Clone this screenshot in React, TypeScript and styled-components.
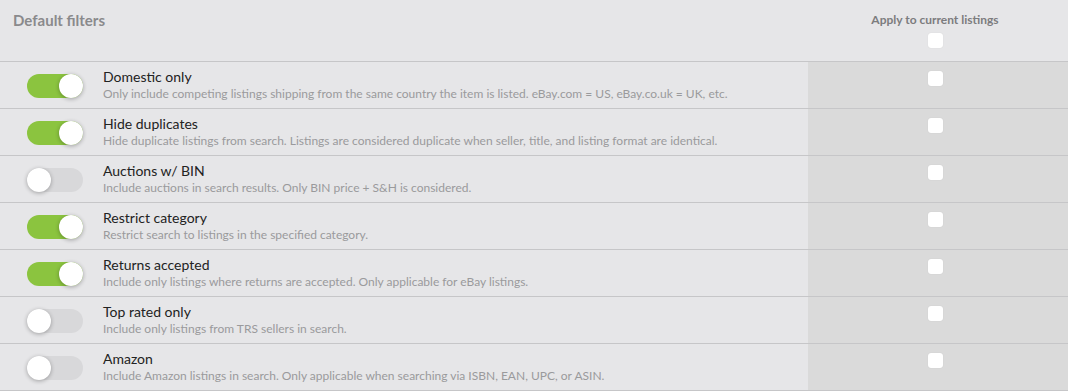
import styled, { createGlobalStyle } from "styled-components";

const GlobalStyle = createGlobalStyle`
    html, body {
        margin: 0;
        padding: 0;
        background: #e6e6e8;
        font-family: Lato, "Open Sans", sans-serif;
    }
`;

const Table = styled.div`
    width: 1068px;
    background: #e6e6e8;
`;

const HeaderRow = styled.div`
    display: grid;
    grid-template-columns: 808px 1fr;
    height: 62px;
    border-bottom: 1px solid #c6c6c8;
    box-sizing: border-box;
`;

const Title = styled.h2`
    margin: 0;
    padding: 11px 0 0 13px;
    font-size: 15px;
    font-weight: 700;
    color: #8a8a8c;
`;

const ApplyHead = styled.div`
    display: flex;
    flex-direction: column;
    align-items: center;
    padding: 12px 6px 0 0;
    gap: 6px;
    font-size: 12px;
    line-height: 15px;
    font-weight: 700;
    color: #7c7c7e;
`;

const Row = styled.div`
    display: grid;
    grid-template-columns: 808px 1fr;
    height: 47px;
    border-bottom: 1px solid #c6c6c8;
    box-sizing: border-box;
`;

const Main = styled.div`
    display: flex;
    align-items: flex-start;
    padding-top: 6px;
`;

const ToggleCell = styled.div`
    width: 103px;
    padding: 6px 0 0 27px;
    box-sizing: border-box;
`;

const Track = styled.div<{ $on: boolean }>`
    position: relative;
    width: 56px;
    height: 24px;
    border-radius: 12px;
    background: ${(p) => (p.$on ? "#8bc43f" : "#d8d8da")};
`;

const Knob = styled.div<{ $on: boolean }>`
    position: absolute;
    top: 0;
    left: ${(p) => (p.$on ? "32px" : "0")};
    width: 24px;
    height: 24px;
    border-radius: 50%;
    background: #fff;
    box-shadow: 0 1px 4px rgba(0, 0, 0, 0.3);
`;

const Text = styled.div`
    display: flex;
    flex-direction: column;
    gap: 1px;
`;

const Name = styled.div`
    font-size: 14px;
    color: #222;
    line-height: 17px;
`;

const Desc = styled.div`
    font-size: 12px;
    color: #9a9a9c;
    line-height: 15px;
`;

const ApplyCell = styled.div`
    background: #dadada;
    display: flex;
    justify-content: center;
    padding: 9px 6px 0 0;
`;

const Box = styled.div`
    width: 15px;
    height: 15px;
    border-radius: 3px;
    background: #fff;
    box-shadow: 0 0 1px rgba(0, 0, 0, 0.15);
`;

const filters = [
    { name: "Domestic only", desc: "Only include competing listings shipping from the same country the item is listed. eBay.com = US, eBay.co.uk = UK, etc.", on: true },
    { name: "Hide duplicates", desc: "Hide duplicate listings from search. Listings are considered duplicate when seller, title, and listing format are identical.", on: true },
    { name: "Auctions w/ BIN", desc: "Include auctions in search results. Only BIN price + S&H is considered.", on: false },
    { name: "Restrict category", desc: "Restrict search to listings in the specified category.", on: true },
    { name: "Returns accepted", desc: "Include only listings where returns are accepted. Only applicable for eBay listings.", on: true },
    { name: "Top rated only", desc: "Include only listings from TRS sellers in search.", on: false },
    { name: "Amazon", desc: "Include Amazon listings in search. Only applicable when searching via ISBN, EAN, UPC, or ASIN.", on: false },
];

function App() {
    return (
        <Table>
            <GlobalStyle />
            <HeaderRow>
                <Title>Default filters</Title>
                <ApplyHead>
                    Apply to current listings
                    <Box />
                </ApplyHead>
            </HeaderRow>
            {filters.map((f) => (
                <Row key={f.name}>
                    <Main>
                        <ToggleCell>
                            <Track $on={f.on}>
                                <Knob $on={f.on} />
                            </Track>
                        </ToggleCell>
                        <Text>
                            <Name>{f.name}</Name>
                            <Desc>{f.desc}</Desc>
                        </Text>
                    </Main>
                    <ApplyCell>
                        <Box />
                    </ApplyCell>
                </Row>
            ))}
        </Table>
    );
}

export default App;
